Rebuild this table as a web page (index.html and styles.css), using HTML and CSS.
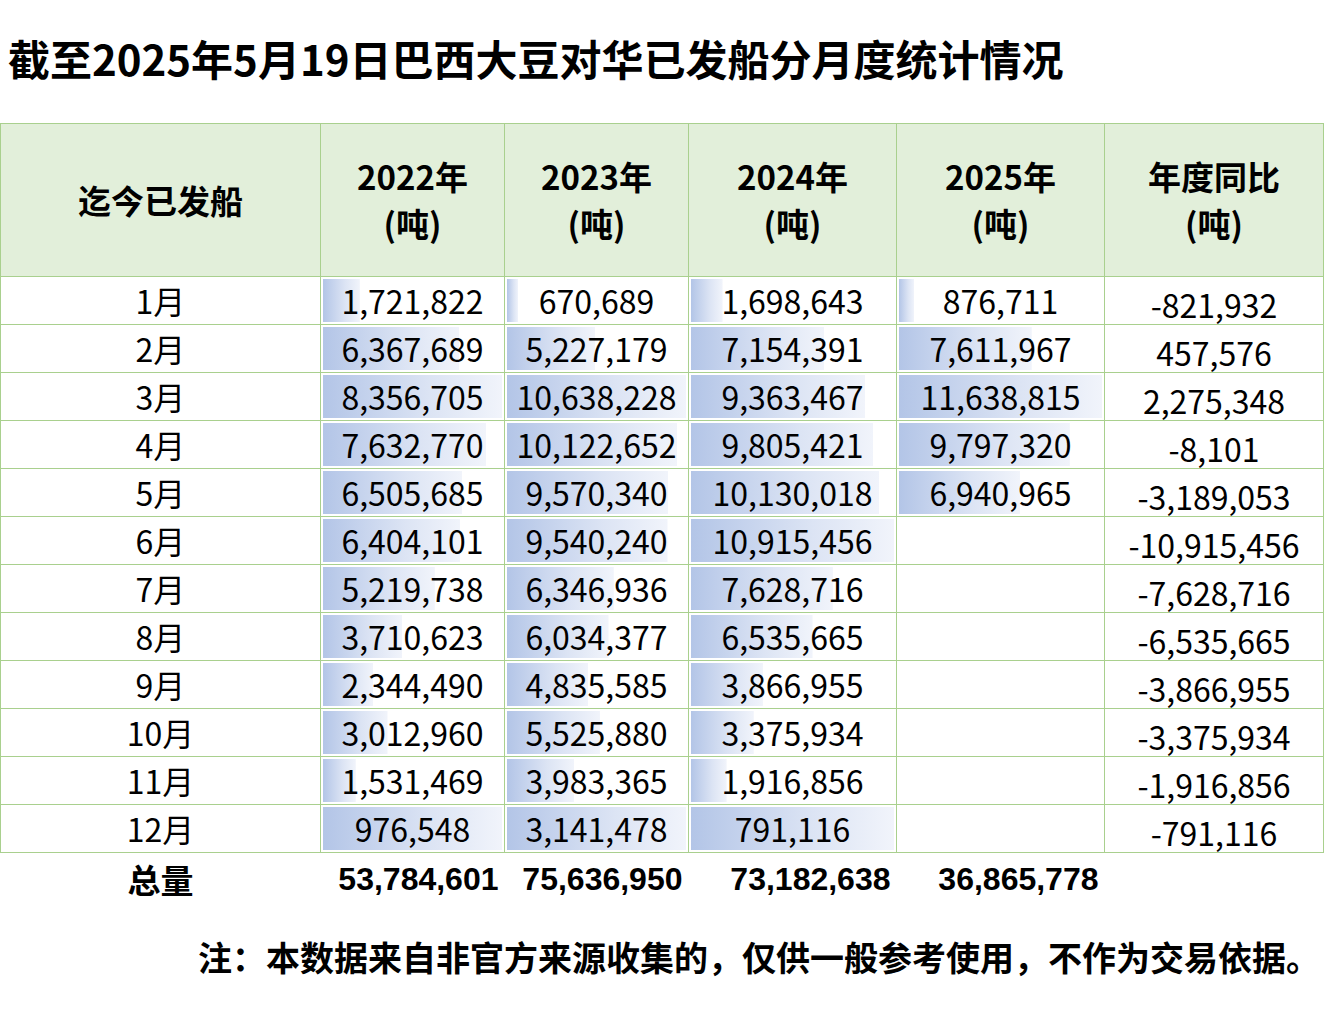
FILE: index.html
```html
<!DOCTYPE html>
<html lang="zh-CN">
<head>
<meta charset="utf-8">
<title>巴西大豆对华已发船分月度统计情况</title>
<link rel="stylesheet" href="styles.css">
</head>
<body>
<h1 class="title">截至2025年5月19日巴西大豆对华已发船分月度统计情况</h1>
<table class="sheet">
  <colgroup>
    <col class="c-month"><col class="c-y1"><col class="c-y2"><col class="c-y3"><col class="c-y4"><col class="c-yoy">
  </colgroup>
  <thead>
    <tr>
      <th>迄今已发船</th>
      <th>2022年<br>(吨)</th>
      <th>2023年<br>(吨)</th>
      <th>2024年<br>(吨)</th>
      <th>2025年<br>(吨)</th>
      <th>年度同比<br>(吨)</th>
    </tr>
  </thead>
  <tbody>
    <tr><td class="m">1月</td><td class="bar" style="--w:20.60%">1,721,822</td><td class="bar" style="--w:6.31%">670,689</td><td class="bar" style="--w:15.56%">1,698,643</td><td class="bar" style="--w:7.53%">876,711</td><td class="yoy">-821,932</td></tr>
    <tr><td class="m">2月</td><td class="bar" style="--w:76.20%">6,367,689</td><td class="bar" style="--w:49.14%">5,227,179</td><td class="bar" style="--w:65.54%">7,154,391</td><td class="bar" style="--w:65.40%">7,611,967</td><td class="yoy">457,576</td></tr>
    <tr><td class="m">3月</td><td class="bar" style="--w:100%">8,356,705</td><td class="bar" style="--w:100%">10,638,228</td><td class="bar" style="--w:85.78%">9,363,467</td><td class="bar" style="--w:100%">11,638,815</td><td class="yoy">2,275,348</td></tr>
    <tr><td class="m">4月</td><td class="bar" style="--w:91.34%">7,632,770</td><td class="bar" style="--w:95.15%">10,122,652</td><td class="bar" style="--w:89.83%">9,805,421</td><td class="bar" style="--w:84.18%">9,797,320</td><td class="yoy">-8,101</td></tr>
    <tr><td class="m">5月</td><td class="bar" style="--w:77.85%">6,505,685</td><td class="bar" style="--w:89.96%">9,570,340</td><td class="bar" style="--w:92.80%">10,130,018</td><td class="bar" style="--w:59.64%">6,940,965</td><td class="yoy">-3,189,053</td></tr>
    <tr><td class="m">6月</td><td class="bar" style="--w:76.63%">6,404,101</td><td class="bar" style="--w:89.68%">9,540,240</td><td class="bar" style="--w:100%">10,915,456</td><td class="bar"></td><td class="yoy">-10,915,456</td></tr>
    <tr><td class="m">7月</td><td class="bar" style="--w:62.46%">5,219,738</td><td class="bar" style="--w:59.66%">6,346,936</td><td class="bar" style="--w:69.89%">7,628,716</td><td class="bar"></td><td class="yoy">-7,628,716</td></tr>
    <tr><td class="m">8月</td><td class="bar" style="--w:44.40%">3,710,623</td><td class="bar" style="--w:56.72%">6,034,377</td><td class="bar" style="--w:59.88%">6,535,665</td><td class="bar"></td><td class="yoy">-6,535,665</td></tr>
    <tr><td class="m">9月</td><td class="bar" style="--w:28.05%">2,344,490</td><td class="bar" style="--w:45.45%">4,835,585</td><td class="bar" style="--w:35.43%">3,866,955</td><td class="bar"></td><td class="yoy">-3,866,955</td></tr>
    <tr><td class="m">10月</td><td class="bar" style="--w:36.05%">3,012,960</td><td class="bar" style="--w:51.94%">5,525,880</td><td class="bar" style="--w:30.93%">3,375,934</td><td class="bar"></td><td class="yoy">-3,375,934</td></tr>
    <tr><td class="m">11月</td><td class="bar" style="--w:18.33%">1,531,469</td><td class="bar" style="--w:37.44%">3,983,365</td><td class="bar" style="--w:17.56%">1,916,856</td><td class="bar"></td><td class="yoy">-1,916,856</td></tr>
    <tr><td class="m">12月</td><td class="bar" style="--w:100%">976,548</td><td class="bar" style="--w:100%">3,141,478</td><td class="bar" style="--w:100%">791,116</td><td class="bar"></td><td class="yoy">-791,116</td></tr>
  </tbody>
  <tfoot>
    <tr><td class="tl">总量</td><td class="tv">53,784,601</td><td class="tv">75,636,950</td><td class="tv">73,182,638</td><td class="tv">36,865,778</td><td class="tv"></td></tr>
  </tfoot>
</table>
<p class="note">注：本数据来自非官方来源收集的，仅供一般参考使用，不作为交易依据。</p>
</body>
</html>
```
FILE: styles.css
```css
html, body {
  margin: 0;
  padding: 0;
  background: #ffffff;
}
body {
  font-family: "Noto Sans CJK SC", "Noto Sans", sans-serif;
  color: #000;
  width: 1324px;
}
.title {
  margin: 0;
  padding: 28px 0 0 8px;
  height: 64px;
  line-height: 60px;
  font-size: 42px;
  font-weight: 700;
}
.sheet {
  margin-top: 31px;
  border-collapse: collapse;
  table-layout: fixed;
  width: 1323px;
}
.c-month { width: 320px; }
.c-y1 { width: 184px; }
.c-y2 { width: 184px; }
.c-y3 { width: 208px; }
.c-y4 { width: 208px; }
.c-yoy { width: 219px; }

.sheet thead th {
  background: #e2efda;
  border: 1px solid #a9d08e;
  height: 152px;
  padding: 0;
  font-size: 33px;
  font-weight: 700;
  line-height: 47px;
  text-align: center;
  vertical-align: middle;
}
.sheet tbody td {
  border: 1px solid #a9d08e;
  height: 43px;
  padding: 2px;
  font-size: 32px;
  line-height: 43px;
  text-align: center;
  vertical-align: middle;
  white-space: nowrap;
}
.sheet tbody td.bar {
  background-image: linear-gradient(90deg, #b3c5e7 0%, #dce4f4 60%, #f1f4fb 100%);
  background-repeat: no-repeat;
  background-origin: content-box;
  background-clip: content-box;
  background-size: var(--w, 0%) 100%;
}
.sheet tbody td.yoy {
  padding-top: 8px;
  padding-bottom: 0;
  height: 39px;
  line-height: 39px;
}
.sheet tfoot td {
  border: none;
  height: 52px;
  padding: 0;
  font-size: 33px;
  font-weight: 700;
  vertical-align: middle;
}
.sheet tfoot td.tl {
  text-align: center;
}
.sheet tfoot td.tv {
  text-align: right;
  padding-right: 6px;
  font-family: "Liberation Sans", Arial, sans-serif;
  font-size: 32px;
}
.note {
  margin: 24px 4px 0 0;
  text-align: right;
  font-size: 34px;
  font-weight: 700;
  line-height: 56px;
}
```
